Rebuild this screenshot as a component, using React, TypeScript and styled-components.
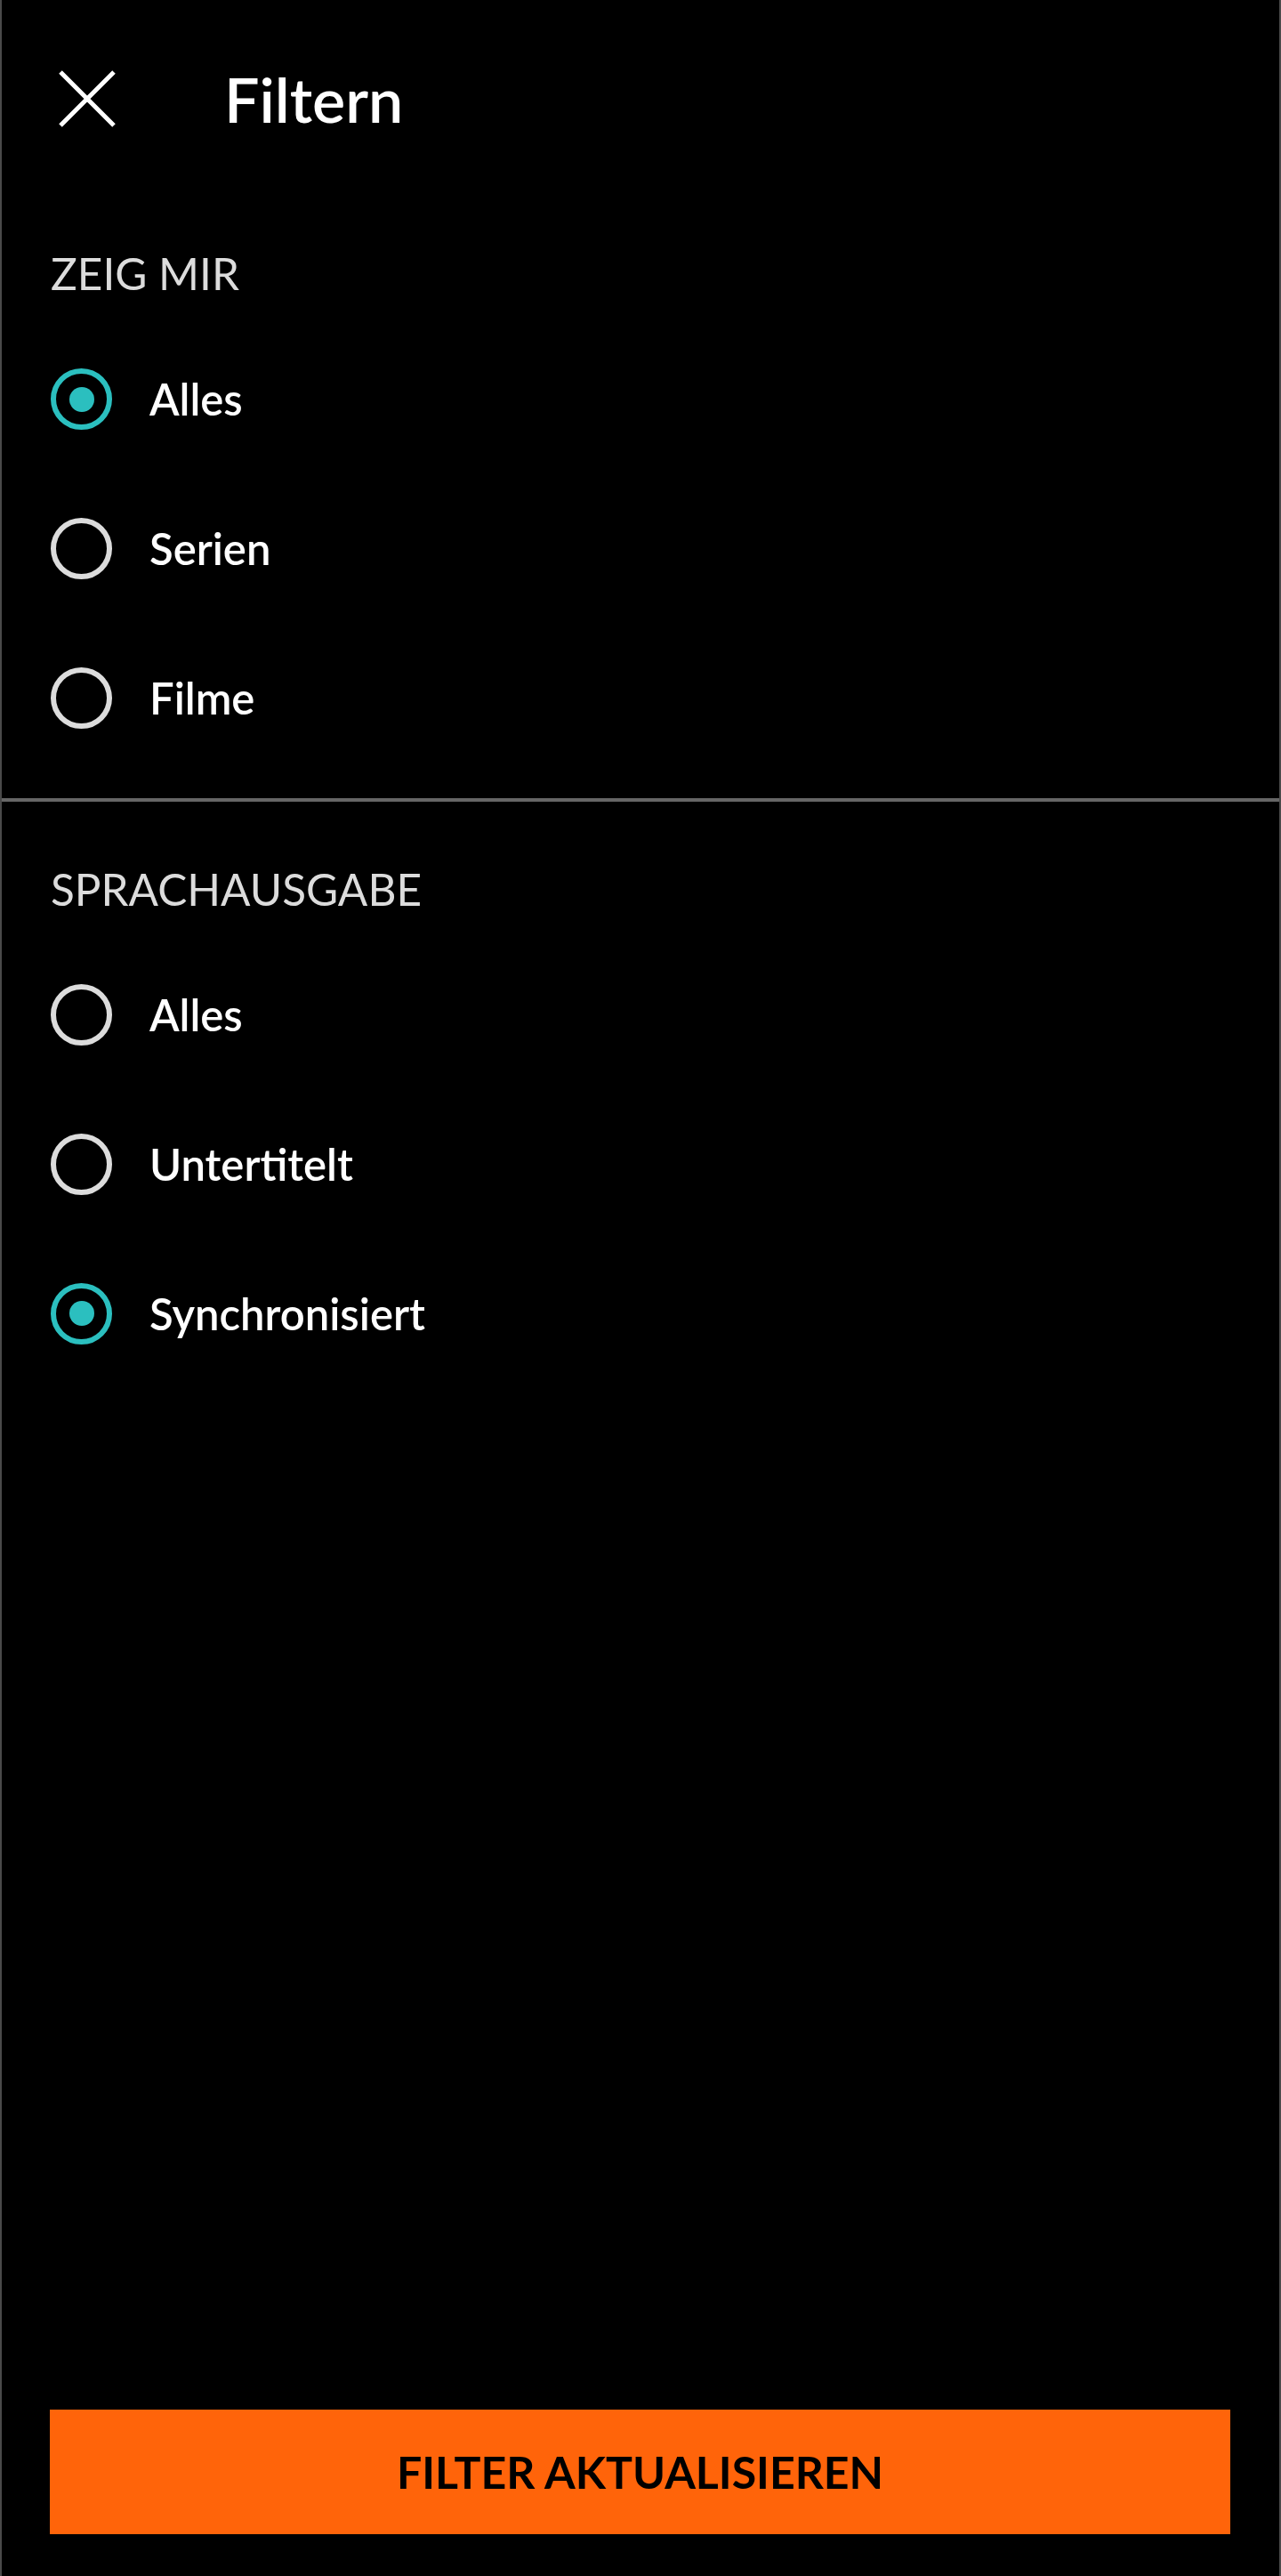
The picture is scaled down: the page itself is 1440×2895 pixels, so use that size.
import { useState } from 'react';
import styled, { createGlobalStyle } from 'styled-components';

const GlobalStyle = createGlobalStyle`
  html, body {
    margin: 0;
    padding: 0;
    background: #000;
  }
  * {
    box-sizing: border-box;
  }
`;

const Page = styled.div`
  display: flex;
  flex-direction: column;
  min-height: 2895px;
  background: #000;
  border-left: 2px solid #4a4a4a;
  border-right: 2px solid #4a4a4a;
  font-family: Lato, "Liberation Sans", sans-serif;
  color: #fff;
`;

const Header = styled.div`
  display: flex;
  align-items: center;
  height: 222px;
  padding-left: 64px;
`;

const CloseButton = styled.button`
  display: flex;
  align-items: center;
  justify-content: center;
  width: 64px;
  height: 64px;
  padding: 0;
  border: none;
  background: none;
  cursor: pointer;
`;

const Title = styled.h1`
  margin: 0 0 0 122px;
  font-size: 70px;
  line-height: 1;
  font-weight: 600;
  color: #fff;
`;

const Section = styled.div<{ $top: number }>`
  display: flex;
  flex-direction: column;
  padding: ${(p) => p.$top}px 0 0 55px;
`;

const SectionLabel = styled.div`
  font-size: 49.5px;
  line-height: 1;
  font-weight: 400;
  color: #dcdcdc;
  margin-bottom: 32px;
`;

const Option = styled.label`
  display: flex;
  align-items: center;
  height: 168px;
  cursor: pointer;
`;

const Radio = styled.span<{ $checked: boolean }>`
  display: flex;
  align-items: center;
  justify-content: center;
  width: 69px;
  height: 69px;
  border-radius: 50%;
  border: 6px solid ${(p) => (p.$checked ? '#2bbfbf' : '#dcdcdc')};

  &::after {
    content: '';
    display: ${(p) => (p.$checked ? 'block' : 'none')};
    width: 28px;
    height: 28px;
    border-radius: 50%;
    background: #2bbfbf;
  }
`;

const OptionText = styled.span`
  margin-left: 42px;
  font-size: 49px;
  line-height: 1;
  font-weight: 600;
  color: #fff;
`;

const Divider = styled.div`
  height: 4px;
  margin-top: 28px;
  background: #666;
`;

const Footer = styled.div`
  margin-top: auto;
  padding: 0 55px 47px 54px;
`;

const SubmitButton = styled.button`
  width: 100%;
  height: 140px;
  border: none;
  background: #ff640a;
  color: #000;
  font-family: Lato, "Liberation Sans", sans-serif;
  font-size: 50px;
  font-weight: 700;
  cursor: pointer;
`;

type Group = {
  label: string;
  options: string[];
};

const groups: Group[] = [
  { label: 'ZEIG MIR', options: ['Alles', 'Serien', 'Filme'] },
  { label: 'SPRACHAUSGABE', options: ['Alles', 'Untertitelt', 'Synchronisiert'] },
];

export default function App() {
  const [selected, setSelected] = useState<number[]>([0, 2]);

  return (
    <>
      <GlobalStyle />
      <Page>
        <Header>
          <CloseButton aria-label="Schließen">
            <svg width="64" height="64" viewBox="0 0 64 64">
              <path d="M2 2L62 62M62 2L2 62" stroke="#fff" strokeWidth="5" />
            </svg>
          </CloseButton>
          <Title>Filtern</Title>
        </Header>

        {groups.map((group, gi) => (
          <div key={group.label}>
            {gi > 0 && <Divider />}
            <Section $top={gi === 0 ? 61 : 74}>
              <SectionLabel>{group.label}</SectionLabel>
              {group.options.map((opt, oi) => (
                <Option
                  key={opt}
                  onClick={() =>
                    setSelected((s) => s.map((v, i) => (i === gi ? oi : v)))
                  }
                >
                  <Radio $checked={selected[gi] === oi} />
                  <OptionText>{opt}</OptionText>
                </Option>
              ))}
            </Section>
          </div>
        ))}

        <Footer>
          <SubmitButton>FILTER AKTUALISIEREN</SubmitButton>
        </Footer>
      </Page>
    </>
  );
}
